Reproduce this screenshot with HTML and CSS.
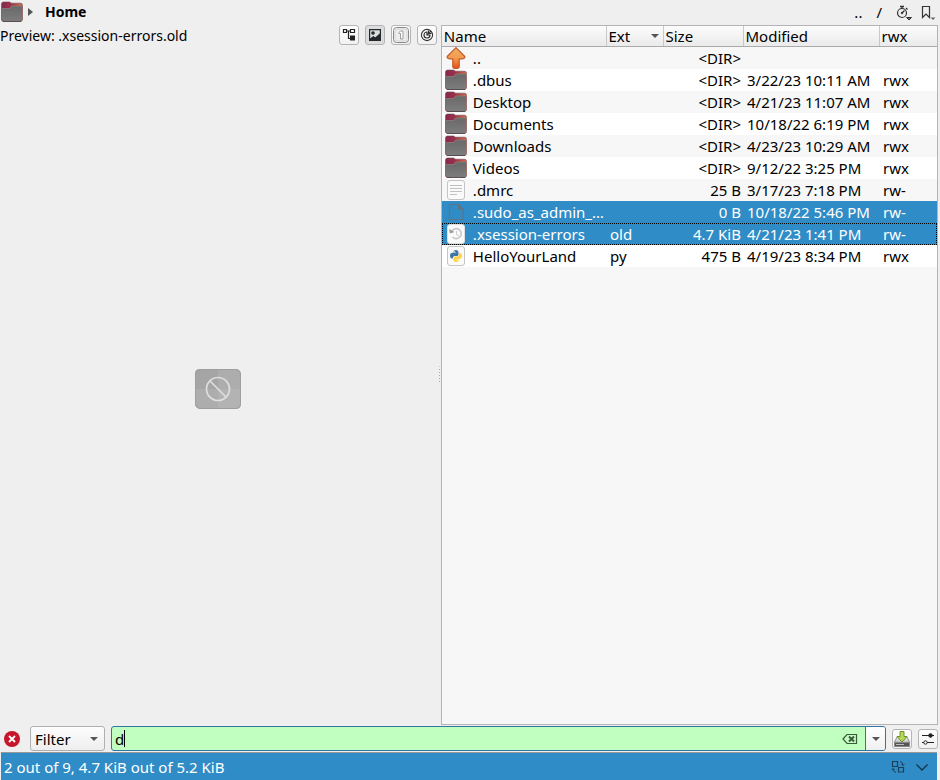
FILE: index.html
```
<!DOCTYPE html>
<html lang="en">
<head>
<meta charset="utf-8">
<title>Home</title>
<link rel="stylesheet" href="styles.css">
</head>
<body>
<svg class="sprite" aria-hidden="true">
  <defs>
    <linearGradient id="folder-back" x1="0" x2="1"><stop offset="0" stop-color="#86264f"/><stop offset=".45" stop-color="#9c3349"/><stop offset="1" stop-color="#cf6a44"/></linearGradient>
    <linearGradient id="folder-front" x1="0" y1="0" x2="0" y2="1"><stop offset="0" stop-color="#696969"/><stop offset="1" stop-color="#7c7c7c"/></linearGradient>
    <linearGradient id="arrow-fill" x1="0" y1="0" x2="0" y2="1"><stop offset="0" stop-color="#f0b063"/><stop offset=".5" stop-color="#f39a4e"/><stop offset="1" stop-color="#ec4d12"/></linearGradient>
    <linearGradient id="disk-fill" x1="0" y1="0" x2="0" y2="1"><stop offset="0" stop-color="#f4f4f4"/><stop offset="1" stop-color="#8c8c8c"/></linearGradient>
  </defs>
  <symbol id="folder" viewBox="0 0 22 22">
    <path d="M0.500 3q0-2 2-2h6l2 1.200h9q2 0 2 2v14.300q0 2-2 2h-17q-2 0-2-2z" fill="url(#folder-back)" stroke="#6b4650" stroke-opacity=".6"/>
    <path d="M1 7.500h8l1.500-2.500h10.500v13.500q0 1.500-1.800 1.500h-16.400q-1.800 0-1.800-1.500z" fill="url(#folder-front)"/>
    <path d="M1 7.500h8l1.500-2.500h10.500" fill="none" stroke="#8b8783" stroke-width=".7"/>
    <path d="M2 20.500h18" stroke="#574c4f"/>
  </symbol>
  <symbol id="up" viewBox="0 0 22 22">
    <path d="M11 .7L19.800 9.500q.3 2-2.300 2.300h-3.300v8q0 1.700-3.200 1.700t-3.200-1.700v-8h-3.300q-2.600-.3-2.300-2.300z" fill="url(#arrow-fill)" stroke="#bc5b2c" stroke-width="1.200" stroke-linejoin="round"/>
  </symbol>
  <symbol id="text-file" viewBox="0 0 22 22">
    <rect x="2.500" y="1.500" width="17" height="19" rx="2.500" fill="#fafafa" stroke="#c4c4c4"/>
    <path d="M5 6.500h12M5 9.500h12M5 12.500h12M5 15.500h7" stroke="#c0c0c0"/>
  </symbol>
  <symbol id="blank-file" viewBox="0 0 22 22">
    <path d="M4.500 3.500h9l4.500 4.500v10.500h-13.500zM13.500 3.500v4.500h4.500" fill="none" stroke="#5f7387" stroke-width="1.200"/>
    <path d="M13 3l5.500 5.500h-5.500z" fill="#5f7387"/>
  </symbol>
  <symbol id="old-file" viewBox="0 0 22 22">
    <rect x="2.500" y="1.500" width="17" height="19" rx="2.500" fill="#fafafa" stroke="#dedede"/>
    <path d="M6.500 9a5 5 0 1 1 1 5" fill="none" stroke="#c9c9c9" stroke-width="1.700"/>
    <path d="M4 6l1 4.500 4.500-1.500z" fill="#9b9b9b"/><path d="M11.500 8v3.500l2.500 1.500" fill="none" stroke="#c9c9c9"/>
  </symbol>
  <symbol id="python" viewBox="0 0 22 22">
    <rect x="2.500" y="1.500" width="17" height="19" rx="2.500" fill="#fafafa" stroke="#c4c4c4"/>
    <path d="M8.300 7.300q0-2.300 2.500-2.300t2.700 2v2.500q0 1.500-1.500 1.500h-2.500q-1.800 0-1.800 2.500h-1q-1.700-.3-1.700-3t2-2.700h3.800v-.5z" fill="#3d77a6"/>
    <path d="M13.900 8h1.200q1.900.2 1.900 3t-2 2.900h-3.700v.5h2.600q0 2.600-2.800 2.600t-2.700-2v-2q0-1.500 1.500-1.500h2.400q1.600 0 1.600-2z" fill="#ffd24a"/>
    <circle cx="9.600" cy="6.500" r=".5" fill="#fff"/><circle cx="12.600" cy="15.600" r=".5" fill="#fff"/>
  </symbol>
</svg>

<div class="window">
  <header class="pathbar">
    <nav class="crumbs" aria-label="Location">
      <svg class="icon"><use href="#folder"/></svg>
      <svg class="chevron" viewBox="0 0 5 8"><path d="M0 0L5 4L0 8z" fill="#555"/></svg>
      <a href="#home">Home</a>
    </nav>
    <div class="shortcuts">
      <button type="button" class="flat">..</button>
      <button type="button" class="flat slash">/</button>
      <button type="button" class="flat" aria-label="History">
        <svg width="16" height="18" viewBox="0 0 16 18" fill="none" stroke="#333"><circle cx="6" cy="10" r="4.500" stroke-width="1.200"/><path d="M4 3.500h4M6 3.500v2M10 5l1.500 1.500M6 10l2.500-2.500" stroke-width="1.300"/><circle cx="6" cy="10" r=".8" fill="#333"/><path d="M10.500 14.500h5l-2.500 2.500z" fill="#666"/></svg>
      </button>
      <button type="button" class="flat" aria-label="Bookmarks">
        <svg width="16" height="18" viewBox="0 0 16 18" fill="none" stroke="#333"><path d="M2.500 3.500h7v11l-3.500-3.500l-3.500 3.500z" stroke-width="1.200"/><path d="M10.500 14.500h5l-2.500 2.500z" fill="#666" stroke="none"/></svg>
      </button>
    </div>
  </header>

  <main class="panes">
    <section class="preview">
      <div class="preview-bar">
        <h2>Preview: .xsession-errors.old</h2>
        <div class="tools">
          <button type="button" class="tool" aria-label="Tree"><svg viewBox="0 0 16 16" fill="none" stroke="#222"><path d="M2.500 2.500h3v3h-3zM9.500 2.500h4v3h-4zM5.500 4h4M7.500 4v7.500h3" stroke-width="1.200"/><path d="M9 8.500h5v5h-5z" fill="#222" stroke="none"/></svg></button>
          <button type="button" class="tool" aria-label="Preview" aria-pressed="true"><svg viewBox="0 0 16 16"><path fill-rule="evenodd" d="M2 2h12v12h-12zM3.200 3.200v8.300l3-2 2 1.200 4.600-4.200v-3.300z" fill="#23282c"/><circle cx="6" cy="6" r="1.800" fill="#23282c"/><path d="M3 12l3.200-3 2.200 1.500 4.600-4v6.500h-10z" fill="#23282c"/></svg></button>
          <button type="button" class="tool" aria-label="Quick select"><svg viewBox="0 0 16 16"><rect x=".5" y=".5" width="15" height="15" rx="3" fill="#f8f8f8" stroke="#888"/><rect x="2" y="2" width="12" height="12" rx="2" fill="#ededed" stroke="#d2d2d2"/><path d="M6 5.500l1.500-1.500h2.500v8h-2.500v-5.500h-1.500z" fill="#fff" stroke="#888" stroke-width=".8"/></svg></button>
          <button type="button" class="tool" aria-label="Disk usage"><svg viewBox="0 0 16 16" fill="none" stroke="#333"><circle cx="8" cy="8" r="5.600" stroke-width="1.100"/><path d="M8 5a3 3 0 1 0 3 3h-3z" stroke-width="1.200"/><path d="M8 8l4-4M9.500 3.500v3h3" stroke-width="1.100"/></svg></button>
        </div>
      </div>
      <div class="preview-body">
        <svg class="no-preview" viewBox="0 0 48 42" role="img" aria-label="No preview"><rect x="1" y="1" width="46" height="40" rx="5" fill="#adadad"/><path d="M1 6q0-5 5-5h18v20h-23z" fill="#a5a5a5"/><path d="M24 21h23v15q0 5-5 5h-18z" fill="#b3b3b3"/><rect x="1.500" y="1.500" width="45" height="39" rx="5" fill="none" stroke="#9e9e9e"/><circle cx="24" cy="21" r="11.500" fill="none" stroke="#dedede" stroke-width="1.700"/><path d="M16 13l16 16" stroke="#dedede" stroke-width="1.700"/></svg>
      </div>
      <div class="grip" aria-hidden="true"></div>
    </section>

    <section class="files">
      <table>
        <colgroup><col><col class="c-ext"><col class="c-size"><col class="c-date"><col class="c-mode"></colgroup>
        <thead>
          <tr>
            <th><button type="button">Name</button></th>
            <th><button type="button">Ext<svg class="arrow" viewBox="0 0 8 4"><path d="M0 0h8l-4 4z" fill="#555"/></svg></button></th>
            <th><button type="button">Size</button></th>
            <th><button type="button">Modified</button></th>
            <th><button type="button">rwx</button></th>
          </tr>
        </thead>
        <tbody>
          <tr><td><div class="name"><svg class="icon"><use href="#up"/></svg><span>..</span></div></td><td></td><td>&lt;DIR&gt;</td><td></td><td></td></tr>
          <tr><td><div class="name"><svg class="icon"><use href="#folder"/></svg><span>.dbus</span></div></td><td></td><td>&lt;DIR&gt;</td><td>3/22/23 10:11 AM</td><td>rwx</td></tr>
          <tr><td><div class="name"><svg class="icon"><use href="#folder"/></svg><span>Desktop</span></div></td><td></td><td>&lt;DIR&gt;</td><td>4/21/23 11:07 AM</td><td>rwx</td></tr>
          <tr><td><div class="name"><svg class="icon"><use href="#folder"/></svg><span>Documents</span></div></td><td></td><td>&lt;DIR&gt;</td><td>10/18/22 6:19 PM</td><td>rwx</td></tr>
          <tr><td><div class="name"><svg class="icon"><use href="#folder"/></svg><span>Downloads</span></div></td><td></td><td>&lt;DIR&gt;</td><td>4/23/23 10:29 AM</td><td>rwx</td></tr>
          <tr><td><div class="name"><svg class="icon"><use href="#folder"/></svg><span>Videos</span></div></td><td></td><td>&lt;DIR&gt;</td><td>9/12/22 3:25 PM</td><td>rwx</td></tr>
          <tr><td><div class="name"><svg class="icon"><use href="#text-file"/></svg><span>.dmrc</span></div></td><td></td><td>25 B</td><td>3/17/23 7:18 PM</td><td>rw-</td></tr>
          <tr class="selected"><td><div class="name"><svg class="icon"><use href="#blank-file"/></svg><span>.sudo_as_admin_…</span></div></td><td></td><td>0 B</td><td>10/18/22 5:46 PM</td><td>rw-</td></tr>
          <tr class="selected current"><td><div class="name"><svg class="icon"><use href="#old-file"/></svg><span>.xsession-errors</span></div></td><td>old</td><td>4.7 KiB</td><td>4/21/23 1:41 PM</td><td>rw-</td></tr>
          <tr><td><div class="name"><svg class="icon"><use href="#python"/></svg><span>HelloYourLand</span></div></td><td>py</td><td>475 B</td><td>4/19/23 8:34 PM</td><td>rwx</td></tr>
        </tbody>
      </table>
    </section>
  </main>

  <form class="filterbar">
    <button type="button" class="close" aria-label="Close"><svg viewBox="0 0 16 16"><circle cx="8" cy="8" r="8" fill="#c7162b"/><path d="M5 5l6 6M11 5l-6 6" stroke="#fff" stroke-width="1.800"/></svg></button>
    <div class="mode">
      <select aria-label="Mode"><option>Filter</option></select>
      <svg class="arrow" viewBox="0 0 8 4"><path d="M0 0h8l-4 4z" fill="#555"/></svg>
    </div>
    <div class="combo">
      <div class="field">
        <input type="text" value="d" aria-label="Filter text">
        <span class="caret" aria-hidden="true"></span>
      </div>
      <button type="button" class="clear" aria-label="Clear"><svg viewBox="0 0 16 12" fill="none" stroke="#3b5a3b"><path d="M1 6l4-4.500h9.500v9h-9.500z" stroke-width="1.200"/><path d="M7 3.500l5 5M12 3.500l-5 5" stroke-width="2"/></svg></button>
      <button type="button" class="drop" aria-label="Recent filters"><svg class="arrow" viewBox="0 0 8 4"><path d="M0 0h8l-4 4z" fill="#555"/></svg></button>
    </div>
    <button type="button" class="tool" aria-label="Save"><svg viewBox="0 0 16 16"><path d="M3 6h10l2.500 5v4q0 1-1 1h-13q-1 0-1-1v-4z" fill="url(#disk-fill)" stroke="#777" stroke-width=".8"/><path d="M1 11.500h14v3.500h-14z" fill="#555"/><path d="M2 13.500h8" stroke="#bbb"/><path d="M6 .5h4v5h3l-5 5.500l-5-5.500h3z" fill="#b7d95a" stroke="#66891e" stroke-width=".9"/></svg></button>
    <button type="button" class="tool" aria-label="Options"><svg viewBox="0 0 16 16" stroke="#222"><path d="M2 4.500h12M2 11.500h12" stroke-width="1.200"/><circle cx="10.500" cy="4.500" r="1.800" fill="#222"/><circle cx="5.500" cy="11.500" r="1.700" fill="#fff"/></svg></button>
  </form>

  <footer class="status">
    <span>2 out of 9, 4.7 KiB out of 5.2 KiB</span>
    <button type="button" class="flat" aria-label="Swap"><svg width="14" height="14" viewBox="0 0 14 14" fill="none" stroke="#1d4058"><path d="M1.500 1.500h5v5h-5zM7.500 7.500h5v4.500h-5z" stroke-width="1.200"/><path d="M9 1.500q3 .5 3 4M10.500 4l1.500 1.500l1.500-1.500M5 12.500q-3-.5-3-4M.5 10l1.500-1.500l1.500 1.500" /></svg></button>
    <button type="button" class="flat" aria-label="Expand"><svg width="14" height="14" viewBox="0 0 14 14" fill="none" stroke="#12334a"><path d="M1.500 4.500l5.500 5.500l5.500-5.500" stroke-width="1.300"/></svg></button>
  </footer>
</div>
</body>
</html>
```
FILE: styles.css
```
* { box-sizing: border-box; }

body {
  margin: 0;
  background: #efefef;
  color: #000;
  font: 15px/22px "Noto Sans", "Open Sans", sans-serif;
}

button, input, select { margin: 0; padding: 0; font: inherit; color: inherit; }
button { border: 0; background: none; }
svg { display: block; flex: none; }
.sprite { position: absolute; width: 0; height: 0; }
.icon { width: 22px; height: 22px; }
.arrow { width: 8px; height: 4px; }

.window { display: flex; flex-direction: column; height: 100vh; }

.pathbar { display: flex; justify-content: space-between; align-items: center; height: 25px; flex: none; padding-bottom: 1px; }
.crumbs { display: flex; align-items: center; gap: 5px; padding-left: 1px; }
.crumbs a { color: inherit; font-size: 14px; font-weight: bold; text-decoration: none; padding-left: 7px; }
.chevron { width: 5px; height: 8px; }
.shortcuts { display: flex; align-items: center; gap: 8px; padding-right: 4px; }
.shortcuts .slash { padding: 0 6px; }

.panes { display: grid; grid-template-columns: 47fr 53fr; flex: 1; min-height: 0; padding-right: 2px; }

.preview { display: flex; flex-direction: column; position: relative; }
.preview-bar { display: flex; justify-content: space-between; align-items: center; height: 20px; padding-right: 4px; }
.preview-bar h2 { margin: 0; padding-top: 2px; font-size: 14px; font-weight: normal; white-space: nowrap; }
.tools { display: flex; gap: 6px; }
.tool {
  display: grid;
  place-items: center;
  width: 20px;
  height: 20px;
  border: 1px solid #b4b4b4;
  border-radius: 3px;
  background: linear-gradient(#fff, #f1f1f1);
}
.tool svg { width: 16px; height: 16px; }
.tool[aria-pressed="true"] { background: #dcdcdc; }
.preview-body { flex: 1; display: grid; place-items: center; padding: 8px 4px 0 0; }
.no-preview { width: 48px; height: 42px; }
.grip {
  position: absolute;
  right: 1px;
  top: 50%;
  width: 1px;
  height: 17px;
  transform: translateY(-50%);
  background: repeating-linear-gradient(#a8a8a8 0 1px, transparent 1px 3px);
}

.files { border: 1px solid #b4b4b4; background: #f7f7f7; overflow: hidden; }
table { width: 100%; table-layout: fixed; border-collapse: collapse; }
.c-ext { width: 57px; }
.c-size { width: 80px; }
.c-date { width: 136px; }
.c-mode { width: 58px; }
th { padding: 0; height: 20px; border-bottom: 1px solid #ababab; background: linear-gradient(#fcfcfc, #eaeaea); }
th + th { border-left: 1px solid #c8c8c8; }
th button { display: flex; align-items: center; justify-content: space-between; width: 100%; height: 20px; line-height: 20px; padding: 0 4px 0 2px; font-weight: normal; }
thead tr { height: 20px; }
td { height: 22px; padding: 0 0 0 4px; line-height: 22px; white-space: nowrap; }
td:first-child { padding-left: 3px; }
td:nth-child(3) { padding-right: 2px; text-align: right; }
tbody tr:nth-child(even) { background: #fff; }
tbody tr.selected { background: #308cc6; color: #fff; }
tbody tr.current { outline: 1px dotted #000; outline-offset: -1px; }
.name { display: flex; gap: 6px; height: 22px; }

.filterbar { display: flex; align-items: center; height: 27px; flex: none; padding: 0 2px 0 4px; }
.close svg { width: 16px; height: 16px; }
.mode { position: relative; width: 75px; height: 25px; margin: 0 6px 0 10px; }
.mode select {
  width: 100%;
  height: 100%;
  padding: 0 4px;
  border: 1px solid #b0b0b0;
  border-radius: 3px;
  appearance: none;
  background: linear-gradient(#fdfdfd, #eee);
}
.mode .arrow { position: absolute; right: 7px; top: 11px; pointer-events: none; }
.combo { display: flex; flex: 1; height: 25px; margin-right: 6px; border: 1px solid #2f77a3; border-radius: 3px; background: #c0ffc0; overflow: hidden; }
.field { position: relative; flex: 1; display: flex; }
.field input { flex: 1; min-width: 0; padding: 0 3px; border: 0; outline: 0; background: none; }
.caret { position: absolute; left: 12px; top: 3px; width: 1px; height: 17px; background: #000; }
.clear { padding: 0 7px; }
.clear svg { width: 16px; height: 12px; }
.drop { display: grid; place-items: center; width: 20px; border-left: 1px solid #2f77a3; background: linear-gradient(#fff, #f0f0f0); }
.filterbar .tool + .tool { margin-left: 6px; }

.status {
  display: flex;
  align-items: center;
  gap: 10px;
  height: 28px;
  flex: none;
  margin: 0 3px 0 1px;
  padding: 0 8px 0 3px;
  border-top: 1px solid #999;
  background: #308cc6;
  color: #fff;
}
.status span { flex: 1; }
```
